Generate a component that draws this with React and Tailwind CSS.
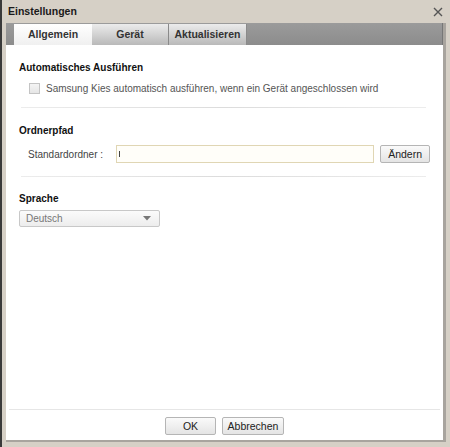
import React from 'react';

const font = { fontFamily: '"Liberation Sans", Arial, sans-serif' };

function Btn({ children, className = '' }) {
  return (
    <button className={`h-[18px] border border-[#b5b5b5] rounded-[2px] bg-gradient-to-b from-[#fafafa] to-[#e4e4e4] text-[10.5px] text-[#222] leading-none ${className}`}>
      {children}
    </button>
  );
}

export default function App() {
  return (
    <div className="w-[450px] h-[447px] bg-[#d6d0c6] border-l-2 border-[#3a3a3a] flex flex-col text-[#222]" style={font}>
      {/* title bar */}
      <div className="h-[23px] flex items-center justify-between pl-[6px] pr-[6px]">
        <span className="text-[10.5px] font-bold text-[#1a1a1a]">Einstellungen</span>
        <svg width="10" height="10" viewBox="0 0 10 10" className="mr-[1px]">
          <path d="M1 1L9 9M9 1L1 9" stroke="#555" strokeWidth="1.4" />
        </svg>
      </div>

      {/* body */}
      <div className="flex-1 flex flex-col ml-[4px] mr-[4px] mb-[5px] border-r-[3px] border-[#a8a49e] border-b-[2px]">
        {/* tabs */}
        <div className="h-[22px] flex items-end pl-[8px] bg-gradient-to-b from-[#9b9b9b] to-[#8c8c8c] border-r border-[#777]">
          <div className="w-[78px] h-[21px] flex items-center justify-center bg-gradient-to-b from-[#ffffff] to-[#f0f0f0] text-[10.5px] font-bold text-[#333]">
            Allgemein
          </div>
          <div className="w-[77px] h-[21px] flex items-center justify-center bg-gradient-to-b from-[#ececec] to-[#b9b9b9] border-r border-[#8a8a8a] text-[10.5px] font-bold text-[#333]">
            Gerät
          </div>
          <div className="w-[78px] h-[21px] flex items-center justify-center bg-gradient-to-b from-[#ececec] to-[#b9b9b9] border-r border-[#8a8a8a] text-[10.5px] font-bold text-[#333]">
            Aktualisieren
          </div>
        </div>

        {/* content */}
        <div className="flex-1 bg-white flex flex-col">
          <div className="flex-1 flex flex-col px-[13px]">
            <div className="pt-[15px] text-[10px] font-bold text-[#111]">Automatisches Ausführen</div>
            <div className="flex items-center gap-[6px] pl-[10px] pt-[6px]">
              <span className="w-[11px] h-[11px] border border-[#c4c4c4] bg-gradient-to-b from-[#f4f4f4] to-[#e6e6e6]" />
              <span className="text-[10px] text-[#555]">Samsung Kies automatisch ausführen, wenn ein Gerät angeschlossen wird</span>
            </div>
            <div className="mt-[11px] ml-[2px] mr-[4px] h-px bg-gradient-to-r from-[#ececec] via-[#dcdcdc] to-[#ececec]" />

            <div className="pt-[15px] text-[10px] font-bold text-[#111]">Ordnerpfad</div>
            <div className="flex items-center pt-[7px] pl-[9px]">
              <span className="w-[88px] text-[10px] text-[#444]">Standardordner :</span>
              <div className="w-[259px] h-[18px] border border-[#e0d6b4] bg-[#fffef9] flex items-center pl-[2px]">
                <span className="w-px h-[6px] bg-[#444]" />
              </div>
              <Btn className="ml-[6px] w-[50px]">Ändern</Btn>
            </div>
            <div className="mt-[13px] ml-[2px] mr-[4px] h-px bg-gradient-to-r from-[#ececec] via-[#dcdcdc] to-[#ececec]" />

            <div className="pt-[14px] text-[10px] font-bold text-[#111]">Sprache</div>
            <div className="mt-[4px] w-[141px] h-[17px] border border-[#c8c8c8] rounded-[2px] bg-gradient-to-b from-[#fbfbfb] to-[#ededed] flex items-center justify-between pl-[6px] pr-[8px]">
              <span className="text-[10px] text-[#777]">Deutsch</span>
              <svg width="8" height="5" viewBox="0 0 8 5"><path d="M0 0H8L4 4.5Z" fill="#777" /></svg>
            </div>
          </div>

          {/* footer */}
          <div className="mx-[3px] h-px bg-[#e6e6e6]" />
          <div className="h-[30px] flex items-start justify-center gap-[6px] pt-[7px]">
            <Btn className="w-[51px]">OK</Btn>
            <Btn className="w-[62px]">Abbrechen</Btn>
          </div>
        </div>
      </div>
    </div>
  );
}
